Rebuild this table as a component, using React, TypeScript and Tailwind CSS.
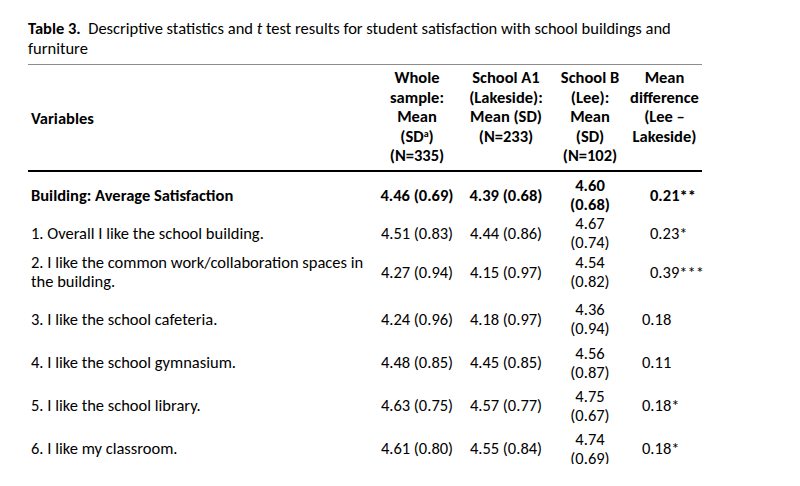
import React from 'react';

type Row = {
  v: string[];
  w: string;
  a: string;
  b: string[];
  d: string;
  bold?: boolean;
  gap: string;
  dPad: string;
};

const rows: Row[] = [
  { v: ['Building: Average Satisfaction'], w: '4.46 (0.69)', a: '4.39 (0.68)', b: ['4.60', '(0.68)'], d: '0.21**', bold: true, gap: 'mt-[4px]', dPad: 'pl-[28px]' },
  { v: ['1. Overall I like the school building.'], w: '4.51 (0.83)', a: '4.44 (0.86)', b: ['4.67', '(0.74)'], d: '0.23*', gap: 'mt-0', dPad: 'pl-[28px]' },
  { v: ['2. I like the common work/collaboration spaces in', 'the building.'], w: '4.27 (0.94)', a: '4.15 (0.97)', b: ['4.54', '(0.82)'], d: '0.39***', gap: 'mt-[1px]', dPad: 'pl-[28px]' },
  { v: ['3. I like the school cafeteria.'], w: '4.24 (0.96)', a: '4.18 (0.97)', b: ['4.36', '(0.94)'], d: '0.18', gap: 'mt-[9px]', dPad: 'pl-[20px]' },
  { v: ['4. I like the school gymnasium.'], w: '4.48 (0.85)', a: '4.45 (0.85)', b: ['4.56', '(0.87)'], d: '0.11', gap: 'mt-[5.5px]', dPad: 'pl-[20px]' },
  { v: ['5. I like the school library.'], w: '4.63 (0.75)', a: '4.57 (0.77)', b: ['4.75', '(0.67)'], d: '0.18*', gap: 'mt-[5px]', dPad: 'pl-[20px]' },
  { v: ['6. I like my classroom.'], w: '4.61 (0.80)', a: '4.55 (0.84)', b: ['4.74', '(0.69)'], d: '0.18*', gap: 'mt-[5px]', dPad: 'pl-[20px]' },
];

const cols = 'grid grid-cols-[352px_74px_104px_64px_80px]';

const HeadCell: React.FC<{ lines: React.ReactNode[]; className?: string }> = ({ lines, className = '' }) => (
  <div className={`flex flex-col items-center text-center ${className}`}>
    {lines.map((l, i) => (
      <div key={i} className="whitespace-nowrap">{l}</div>
    ))}
  </div>
);

export default function App() {
  return (
    <div className="h-[464px] overflow-hidden bg-white pl-[28px] pt-[18px] text-black font-['Carlito','Lato',sans-serif] text-[16.5px]">
      <p className="leading-[20px] whitespace-nowrap">
        <b>Table 3.</b>&nbsp;&nbsp;Descriptive statistics and <i>t</i> test results for student satisfaction with school buildings and
        <br />
        furniture
      </p>

      <div className="mt-[6px] w-[674px] border-t-[1.5px] border-[#8c8c8c]">
        <div className={`${cols} border-b-2 border-black pt-[3px] pb-[4.5px] font-bold leading-[19.5px]`}>
          <div className="flex items-center pl-[3px] pt-[3px]">Variables</div>
          <HeadCell lines={['Whole', 'sample:', 'Mean', <>(SD<sup className="text-[10px]">a</sup>)</>, '(N=335)']} />
          <HeadCell lines={['School A1', '(Lakeside):', 'Mean (SD)', '(N=233)']} />
          <HeadCell lines={['School B', '(Lee):', 'Mean', '(SD)', '(N=102)']} />
          <HeadCell className="pl-[5px]" lines={['Mean', 'difference', '(Lee \u2013', 'Lakeside)']} />
        </div>

        {rows.map((r, i) => (
          <div key={i} className={`${cols} ${r.gap} h-[38px] items-center leading-[19px] ${r.bold ? 'font-bold' : ''}`}>
            <div className="pl-[3px]">
              {r.v.map((t, j) => (
                <div key={j} className="whitespace-nowrap">{t}</div>
              ))}
            </div>
            <div className="text-center whitespace-nowrap">{r.w}</div>
            <div className="text-center whitespace-nowrap">{r.a}</div>
            <div className="text-center">
              {r.b.map((t, j) => (
                <div key={j}>{t}</div>
              ))}
            </div>
            <div className={`${r.dPad} whitespace-nowrap`}>{r.d}</div>
          </div>
        ))}
      </div>
    </div>
  );
}
